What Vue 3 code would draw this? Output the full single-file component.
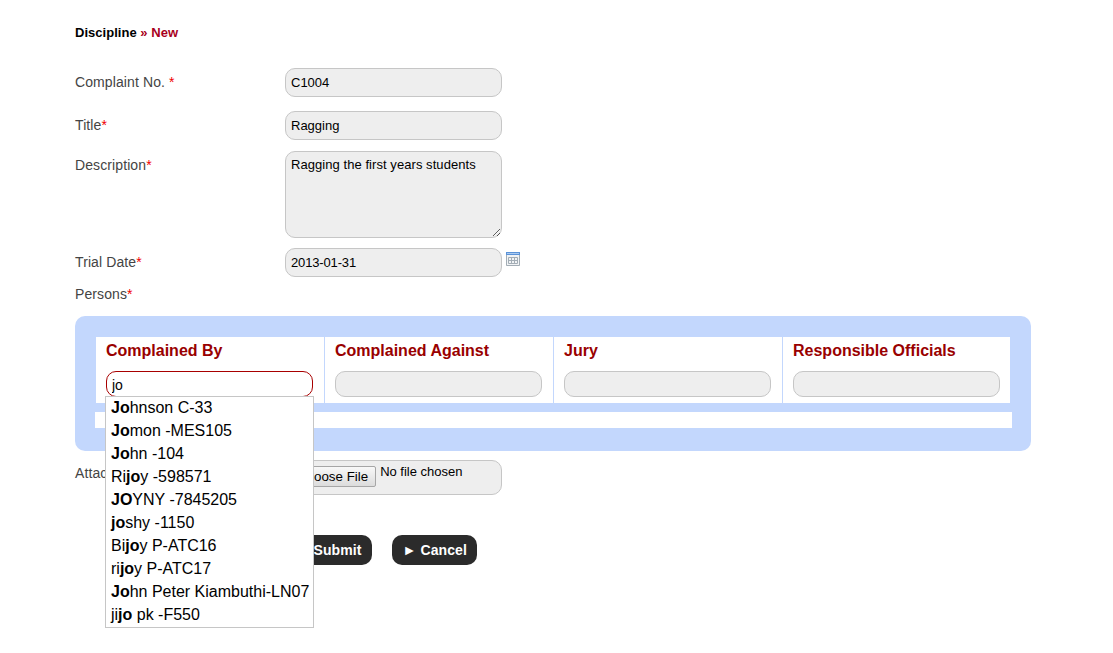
<template>
  <div class="page">

    <div class="crumb">Discipline <span class="now">» New</span></div>

    <div class="row first">
      <label class="lbl">Complaint No. <i>*</i></label>
      <input class="txt" type="text" value="C1004" />
    </div>

    <div class="row title">
      <label class="lbl">Title<i>*</i></label>
      <input class="txt" type="text" value="Ragging" />
    </div>

    <div class="row top desc">
      <label class="lbl">Description<i>*</i></label>
      <textarea class="txt area">Ragging the first years students</textarea>
    </div>

    <div class="row date">
      <label class="lbl">Trial Date<i>*</i></label>
      <input class="txt" type="text" value="2013-01-31" />
      <svg class="cal" width="14" height="14" viewBox="0 0 14 14">
        <rect x="0" y="0" width="14" height="14" fill="#f1f3f5" />
        <rect x="0" y="0" width="14" height="3" fill="#5b93d8" />
        <rect x="1" y="1" width="12" height="1" fill="#a9c9ef" />
        <path d="M0.5 3V13.5H13.5V3M2.5 5.5H11.5V11.5H2.5ZM2.5 8.5H11.5M5.5 5.5V11.5M8.5 5.5V11.5" fill="none" stroke="#a3adb5" />
      </svg>
    </div>

    <div class="persons lbl">Persons<i>*</i></div>

    <div class="panel">
      <div class="cols">
        <div v-for="(c,i) in columns" :key="c" class="col">
          <h3>{{ c }}</h3>
          <input v-if="i===0" class="mini active" type="text" value="jo" />
          <input v-else class="mini" type="text" />
        </div>
      </div>
      <div class="strip"></div>

      <ul class="suggest">
        <li v-for="s in suggestions" :key="s.join()">{{ s[0] }}<b>{{ s[1] }}</b>{{ s[2] }}</li>
      </ul>
    </div>

    <div class="row top attach">
      <label class="lbl">Attachment</label>
      <div class="txt filebox">
        <input type="file" class="file" />
      </div>
    </div>

    <div class="actions">
      <button class="btn" type="button">► Submit</button>
      <button class="btn" type="button">► Cancel</button>
    </div>

  </div>
</template>

<script setup>

const columns=[
  'Complained By',
  'Complained Against',
  'Jury',
  'Responsible Officials'
]

const suggestions=[
  ['','Jo','hnson C-33'],
  ['','Jo','mon -MES105'],
  ['','Jo','hn -104'],
  ['Ri','jo','y -598571'],
  ['','JO','YNY -7845205'],
  ['','jo','shy -1150'],
  ['Bi','jo','y P-ATC16'],
  ['ri','jo','y P-ATC17'],
  ['','Jo','hn Peter Kiambuthi-LN07'],
  ['ji','jo',' pk -F550']
]

</script>

<style>
html,body{
  background:#fff;
}
</style>

<style scoped>

.page{
  box-sizing:border-box;
  min-height:653px;
  padding:25px 82px 0 75px;
  font-family:"Liberation Sans",Arial,sans-serif;
  color:#000;
}

.crumb{
  height:15px;
  line-height:15px;
  font-size:13px;
  font-weight:700;
  letter-spacing:.03px;
}

.now{
  color:#a80020;
}

.row{
  display:flex;
  align-items:center;
}

.row.top{
  align-items:flex-start;
}

.first{
  margin-top:28px;
}

.title{
  margin-top:14px;
}

.desc{
  margin-top:11px;
}

.date{
  margin-top:10px;
}

.lbl{
  box-sizing:border-box;
  width:210px;
  flex:none;
  padding-bottom:2px;
  font-size:14px;
  line-height:16px;
  letter-spacing:.1px;
  color:#444;
}

.lbl i{
  font-style:normal;
  color:#f00000;
}

.desc .lbl{
  padding-top:6px;
}

.attach .lbl{
  padding-top:5px;
}

.txt{
  box-sizing:border-box;
  width:217px;
  height:29px;
  margin:0;
  padding:0 5px;
  border:1px solid #c6c6c6;
  border-radius:10px;
  background:#eee;
  font-family:"Liberation Sans",Arial,sans-serif;
  font-size:13px;
  color:#000;
  outline:none;
}

.date .txt{
  letter-spacing:-.15px;
}

.area{
  display:block;
  height:87px;
  padding:5px;
  line-height:15px;
  letter-spacing:.06px;
}

.cal{
  align-self:flex-start;
  margin:4px 0 0 4px;
}

.persons{
  width:auto;
  margin-top:8px;
  padding:0;
  height:18px;
  line-height:18px;
}

.panel{
  position:relative;
  margin-top:13px;
  padding:21px;
  padding-bottom:23px;
  border-radius:10px;
  background:#c3d7fd;
}

.cols{
  display:grid;
  grid-template-columns:229px 229px 229px 1fr;
  height:66px;
  background:#fff;
}

.col{
  box-sizing:border-box;
  padding:0 0 0 10px;
  border-right:1px solid #c3d7fd;
}

.col:last-child{
  border-right:none;
}

.col h3{
  margin:5px 0 11px;
  font-size:16px;
  line-height:18px;
  font-weight:700;
  color:#990000;
}

.mini{
  display:block;
  box-sizing:border-box;
  width:207px;
  height:26px;
  margin:0;
  padding:1px 5px 0;
  border:1px solid #c6c6c6;
  border-radius:10px;
  background:#eee;
  font-family:"Liberation Sans",Arial,sans-serif;
  font-size:14px;
  color:#000;
  outline:none;
}

.mini.active{
  background:#fff;
  border-color:#a80000;
}

.strip{
  height:16px;
  margin:9px -2px 0 -1px;
  background:#fff;
}

.suggest{
  position:absolute;
  left:30px;
  top:80px;
  z-index:5;
  box-sizing:border-box;
  width:209px;
  height:232px;
  margin:0;
  padding:0 0 0 5px;
  list-style:none;
  border:1px solid #c6c6c6;
  background:#fff;
  font-size:16px;
  white-space:nowrap;
}

.suggest li{
  height:23px;
  line-height:21px;
}

.attach{
  margin-top:9px;
}

.filebox{
  height:35px;
  padding:0;
  overflow:hidden;
}

.file{
  display:block;
  box-sizing:border-box;
  width:215px;
  height:28px;
  margin:3px 0 0 3px;
  font-family:"Liberation Sans",Arial,sans-serif;
  font-size:13px;
  color:#000;
}

.file::file-selector-button{
  box-sizing:border-box;
  height:21px;
  margin:2px 4px 0 0;
  padding:0 7px;
  vertical-align:top;
  border:1px solid #a6a6a6;
  border-radius:2px;
  background:linear-gradient(#f8f8f8,#dcdcdc);
  font-family:"Liberation Sans",Arial,sans-serif;
  font-size:13.33px;
  color:#000;
}

.actions{
  display:flex;
  gap:20px;
  margin-top:40px;
  padding-left:210px;
}

.btn{
  height:30px;
  padding:0 10.5px;
  border:none;
  border-radius:10px;
  background:#2b2b2b;
  color:#fff;
  font-family:"Liberation Sans",Arial,sans-serif;
  font-size:14px;
  font-weight:700;
  letter-spacing:.1px;
}

</style>
